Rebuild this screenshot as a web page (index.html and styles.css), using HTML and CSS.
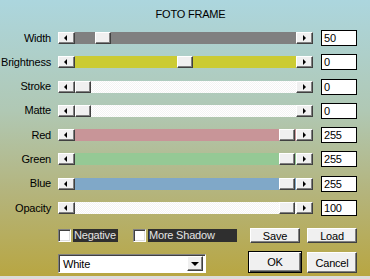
FILE: index.html
```html
<!DOCTYPE html>
<html lang="en">
<head>
    <meta charset="UTF-8">
    <title>Foto Frame</title>
    <link rel="stylesheet" href="styles.css">
</head>
<body>
    <div class="dialog">
        <div class="title">FOTO FRAME</div>

        <div class="rows">
            <div class="row">
                <span class="label">Width</span>
                <div class="slider">
                    <div class="arrow left"></div>
                    <div class="track gray"><div class="thumb" style="left: 20px"></div></div>
                    <div class="arrow right"></div>
                </div>
                <div class="value">50</div>
            </div>
            <div class="row">
                <span class="label">Brightness</span>
                <div class="slider">
                    <div class="arrow left"></div>
                    <div class="track yellow"><div class="thumb" style="left: 102px"></div></div>
                    <div class="arrow right"></div>
                </div>
                <div class="value">0</div>
            </div>
            <div class="row">
                <span class="label">Stroke</span>
                <div class="slider">
                    <div class="arrow left"></div>
                    <div class="track blank"><div class="thumb" style="left: 0px"></div></div>
                    <div class="arrow right"></div>
                </div>
                <div class="value">0</div>
            </div>
            <div class="row">
                <span class="label">Matte</span>
                <div class="slider">
                    <div class="arrow left"></div>
                    <div class="track blank"><div class="thumb" style="left: 0px"></div></div>
                    <div class="arrow right"></div>
                </div>
                <div class="value">0</div>
            </div>
            <div class="row">
                <span class="label">Red</span>
                <div class="slider">
                    <div class="arrow left"></div>
                    <div class="track red"><div class="thumb" style="left: 204px"></div></div>
                    <div class="arrow right"></div>
                </div>
                <div class="value">255</div>
            </div>
            <div class="row">
                <span class="label">Green</span>
                <div class="slider">
                    <div class="arrow left"></div>
                    <div class="track green"><div class="thumb" style="left: 204px"></div></div>
                    <div class="arrow right"></div>
                </div>
                <div class="value">255</div>
            </div>
            <div class="row">
                <span class="label">Blue</span>
                <div class="slider">
                    <div class="arrow left"></div>
                    <div class="track blue"><div class="thumb" style="left: 204px"></div></div>
                    <div class="arrow right"></div>
                </div>
                <div class="value">255</div>
            </div>
            <div class="row">
                <span class="label">Opacity</span>
                <div class="slider">
                    <div class="arrow left"></div>
                    <div class="track blank"><div class="thumb" style="left: 204px"></div></div>
                    <div class="arrow right"></div>
                </div>
                <div class="value">100</div>
            </div>
        </div>

        <div class="options">
            <div class="check"></div>
            <span class="check-label negative">Negative</span>
            <div class="check second"></div>
            <span class="check-label shadow">More Shadow</span>
            <div class="btn save">Save</div>
            <div class="btn load">Load</div>
        </div>

        <div class="actions">
            <div class="select">
                <span>White</span>
                <div class="drop"></div>
            </div>
            <div class="btn ok">OK</div>
            <div class="btn cancel">Cancel</div>
        </div>
    </div>
</body>
</html>
```

FILE: styles.css
```css
:root {
    --face: #f0f0f0;
    --shade: #808080;
    --dark: #404040;
}

body {
    margin: 0;
    background: #dcdcdc;
    font-family: 'Liberation Sans', Arial, sans-serif;
    font-size: 11px;
    letter-spacing: -0.2px;
    color: #000;
}

.dialog {
    width: 370px;
    height: 276px;
    overflow: hidden;
    background: linear-gradient(#acd6de 0%, #b0c8b4 40%, #b4b47c 70%, #b8a642 100%);
}

.title {
    padding: 8px 0 0 11px;
    height: 13px;
    line-height: 13px;
    text-align: center;
    margin-bottom: 9px;
}

.rows {
    display: flex;
    flex-direction: column;
    gap: 8.3px;
}

.row {
    display: flex;
    align-items: center;
    height: 16px;
}

.label {
    width: 51px;
    margin-right: 7px;
    text-align: right;
    line-height: 13px;
    white-space: nowrap;
}

.slider {
    display: flex;
    width: 255px;
    height: 12px;
}

/* raised bevel used by arrows, thumbs, buttons */
.arrow, .thumb, .btn, .drop {
    box-sizing: border-box;
    background: var(--face);
    border: 1px solid;
    border-color: #fff var(--dark) var(--dark) #fff;
    box-shadow: inset -1px -1px var(--shade);
}

.arrow {
    width: 17px;
    height: 12px;
    display: flex;
    justify-content: center;
    align-items: center;
}

.arrow::after {
    content: "";
    border-top: 3px solid transparent;
    border-bottom: 3px solid transparent;
}

.arrow.left::after {
    border-right: 3px solid #000;
    margin-left: -2px;
}

.arrow.right::after {
    border-left: 3px solid #000;
    margin-left: -1px;
}

.track {
    flex: 1;
    position: relative;
}

.track.gray { background: #808080; }
.track.yellow { background: #cbcb33; }
.track.red { background: #c89598; }
.track.green { background: #95c995; }
.track.blue { background: #80a8c8; }
.track.blank {
    background: repeating-conic-gradient(#fff 0 25%, #f3f3f3 0 50%) 0 0 / 2px 2px;
}

.thumb {
    position: absolute;
    top: 0;
    width: 16px;
    height: 12px;
}

.value {
    box-sizing: border-box;
    width: 36px;
    height: 16px;
    margin-left: 8px;
    padding-left: 2px;
    border: 1px solid #000;
    background: #fff;
    line-height: 14px;
}

.options {
    display: flex;
    align-items: center;
    height: 15px;
    margin-top: 12px;
    padding-left: 58px;
}

.check {
    box-sizing: border-box;
    width: 13px;
    height: 13px;
    background: #fff;
    border: 1px solid;
    border-color: var(--shade) #fff #fff var(--shade);
    box-shadow: inset 1px 1px var(--dark), inset -1px -1px #dfdfdf;
}

.check.second {
    margin-left: 15px;
}

.check-label {
    box-sizing: border-box;
    height: 13px;
    margin-left: 2px;
    padding-left: 1px;
    line-height: 13px;
    background: #2f2f2f;
    color: #e4e4e4;
    white-space: nowrap;
}

.negative { width: 45px; }
.shadow { width: 89px; }

.btn {
    display: flex;
    justify-content: center;
    align-items: center;
    width: 50px;
}

.save {
    height: 15px;
    margin-left: 13px;
}

.load {
    height: 15px;
    margin-left: 7px;
}

.actions {
    display: flex;
    align-items: flex-end;
    height: 22px;
    margin-top: 8px;
    padding-left: 58px;
}

.select {
    box-sizing: border-box;
    display: flex;
    align-items: center;
    justify-content: space-between;
    width: 148px;
    height: 19px;
    padding: 2px 2px 2px 4px;
    background: #fff;
    border: 1px solid;
    border-color: var(--shade) #fff #fff var(--shade);
    box-shadow: inset 1px 1px var(--dark);
}

.drop {
    width: 16px;
    height: 15px;
    display: flex;
    justify-content: center;
    align-items: center;
}

.drop::after {
    content: "";
    border-left: 4px solid transparent;
    border-right: 4px solid transparent;
    border-top: 4px solid #000;
}

.ok {
    width: 54px;
    height: 22px;
    margin-left: 42px;
    border: 1px solid #000;
    box-shadow: inset 1px 1px #fff, inset -1px -1px var(--dark), inset -2px -2px var(--shade);
}

.cancel {
    height: 21px;
    margin-left: 5px;
}
```
